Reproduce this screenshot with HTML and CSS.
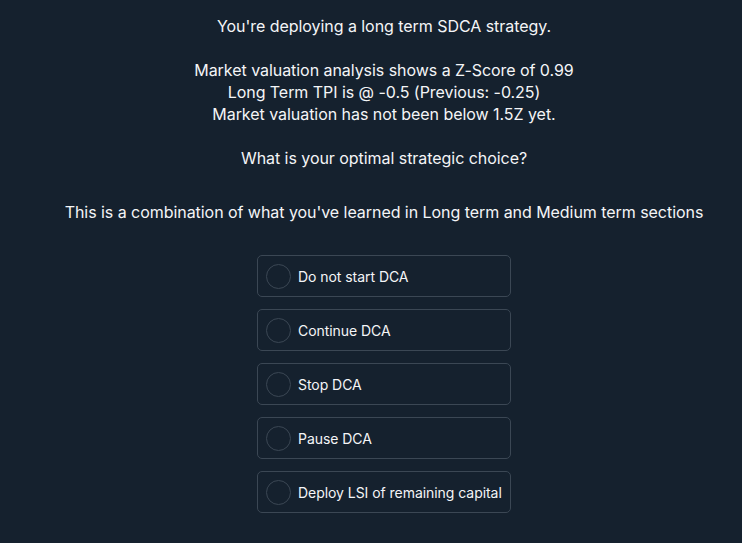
FILE: index.html
```html
<!DOCTYPE html>
<html>
<head>
<meta charset="utf-8">
<link rel="stylesheet" href="styles.css">
</head>
<body>
<main class="quiz">
  <div class="question">
    <p>You're deploying a long term SDCA strategy.</p>
    <p>Market valuation analysis shows a Z-Score of 0.99<br>Long Term TPI is @ -0.5 (Previous: -0.25)<br>Market valuation has not been below 1.5Z yet.</p>
    <p>What is your optimal strategic choice?</p>
  </div>
  <p class="hint">This is a combination of what you've learned in Long term and Medium term sections</p>
  <div class="options">
    <label class="option"><span class="radio"></span><span>Do not start DCA</span></label>
    <label class="option"><span class="radio"></span><span>Continue DCA</span></label>
    <label class="option"><span class="radio"></span><span>Stop DCA</span></label>
    <label class="option"><span class="radio"></span><span>Pause DCA</span></label>
    <label class="option"><span class="radio"></span><span>Deploy LSI of remaining capital</span></label>
  </div>
</main>
</body>
</html>
```
FILE: styles.css
```css
html, body {
  margin: 0;
  padding: 0;
  background: #15212e;
  height: 100%;
}
body {
  font-family: Inter, "Noto Sans", sans-serif;
  color: #f4f5f7;
}
.quiz {
  padding: 15px 0 0 26px;
  display: flex;
  flex-direction: column;
  align-items: center;
}
.question {
  text-align: center;
  font-size: 16px;
  line-height: 22px;
  letter-spacing: -0.05px;
}
.question p {
  margin: 0 0 22px 0;
}
.hint {
  margin: 10px 0 0 0;
  font-size: 16px;
  line-height: 22px;
  letter-spacing: -0.05px;
  text-align: center;
}
.options {
  margin-top: 32px;
  display: flex;
  flex-direction: column;
  gap: 12px;
  width: 254px;
}
.option {
  box-sizing: border-box;
  height: 42px;
  border: 1px solid #3b4754;
  border-radius: 5px;
  display: flex;
  align-items: center;
  padding-left: 8px;
  gap: 7px;
  font-size: 14px;
  letter-spacing: -0.05px;
  color: #f4f5f7;
}
.radio {
  box-sizing: border-box;
  width: 25px;
  height: 25px;
  border: 1px solid #3b4754;
  border-radius: 50%;
  flex: none;
}
```
